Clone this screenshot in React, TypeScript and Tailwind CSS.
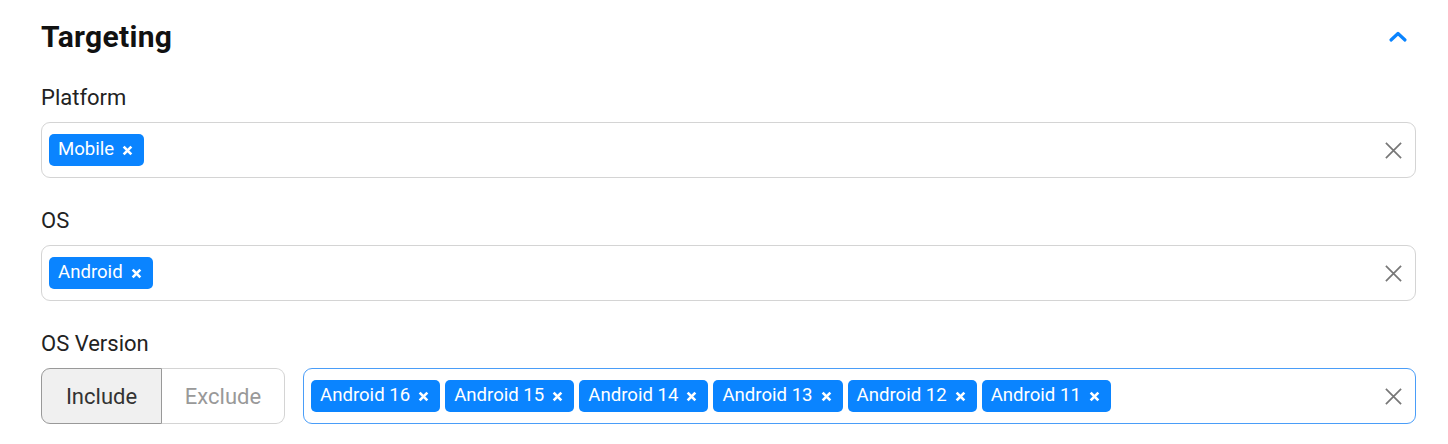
import { useState } from "react";

type TagBoxProps = {
    tags: string[];
    focused?: boolean;
    onRemove: (tag: string) => void;
    onClear: () => void;
};

function ClearIcon() {
    return (
        <svg className="w-[19px] h-[19px] text-[#777]" viewBox="0 0 20 20" fill="none" stroke="currentColor" strokeWidth={1.8}>
            <path d="M2 2l16 16M18 2L2 18" />
        </svg>
    );
}

function TagBox({ tags, focused, onRemove, onClear }: TagBoxProps) {
    return (
        <div
            className={`flex-1 h-[56px] flex items-center pl-[7px] pr-[12px] rounded-[9px] border bg-white ${focused ? "border-[#4a9df8]" : "border-[#d4d4d4]"
                }`}
        >
            <div className="flex-1 flex items-center gap-[5px]">
                {tags.map((tag) => (
                    <span
                        key={tag}
                        className="h-[32px] flex items-center gap-[8px] pl-[9px] pr-[11px] rounded-[5px] bg-[#0a84ff] text-white text-[18.6px]"
                    >
                        {tag}
                        <button onClick={() => onRemove(tag)} className="flex items-center">
                            <svg className="w-[11px] h-[11px]" viewBox="0 0 10 10" fill="none" stroke="currentColor" strokeWidth={2.4}>
                                <path d="M1.5 1.5l7 7M8.5 1.5l-7 7" />
                            </svg>
                        </button>
                    </span>
                ))}
            </div>
            <button onClick={onClear} className="flex items-center">
                <ClearIcon />
            </button>
        </div>
    );
}

export default function App() {
    const [platform, setPlatform] = useState(["Mobile"]);
    const [os, setOs] = useState(["Android"]);
    const [versions, setVersions] = useState([
        "Android 16",
        "Android 15",
        "Android 14",
        "Android 13",
        "Android 12",
        "Android 11",
    ]);
    const [mode, setMode] = useState<"include" | "exclude">("include");

    return (
        <div className="w-[1448px] h-[444px] bg-white pl-[41px] pr-[32px] pt-[18px] font-['Roboto',sans-serif] text-[#222]">
            {/* Header */}
            <div className="flex items-center justify-between h-[36px]">
                <h2 className="text-[30px] font-bold text-[#111] tracking-[0.3px]">Targeting</h2>
                <svg className="w-[20px] h-[13px] mr-[8px] text-[#0a84ff]" viewBox="0 0 20 13" fill="none" stroke="currentColor" strokeWidth={3.2} strokeLinecap="round" strokeLinejoin="round">
                    <path d="M3 10l7-6.5L17 10" />
                </svg>
            </div>

            {/* Platform */}
            <div className="mt-[32px]">
                <div className="text-[22px] leading-[24px] mb-[12px]">Platform</div>
                <div className="flex">
                    <TagBox tags={platform} onRemove={(t) => setPlatform(platform.filter((p) => p !== t))} onClear={() => setPlatform([])} />
                </div>
            </div>

            {/* OS */}
            <div className="mt-[31px]">
                <div className="text-[22px] leading-[24px] mb-[12px]">OS</div>
                <div className="flex">
                    <TagBox tags={os} onRemove={(t) => setOs(os.filter((p) => p !== t))} onClear={() => setOs([])} />
                </div>
            </div>

            {/* OS Version */}
            <div className="mt-[31px]">
                <div className="text-[22px] leading-[24px] mb-[12px]">OS Version</div>
                <div className="flex items-center gap-[18px]">
                    <div className="flex h-[56px] w-[244px] text-[22px]">
                        <button
                            onClick={() => setMode("include")}
                            className={`w-[121px] rounded-l-[9px] border ${mode === "include"
                                ? "bg-[#f0f0f0] border-[#999] text-[#333]"
                                : "bg-white border-[#d4d4d4] border-r-0 text-[#999]"
                                }`}
                        >
                            Include
                        </button>
                        <button
                            onClick={() => setMode("exclude")}
                            className={`flex-1 rounded-r-[9px] border ${mode === "exclude"
                                ? "bg-[#f0f0f0] border-[#999] text-[#333]"
                                : "bg-white border-[#d4d4d4] border-l-0 text-[#999]"
                                }`}
                        >
                            Exclude
                        </button>
                    </div>
                    <TagBox
                        tags={versions}
                        focused
                        onRemove={(t) => setVersions(versions.filter((p) => p !== t))}
                        onClear={() => setVersions([])}
                    />
                </div>
            </div>
        </div>
    );
}
